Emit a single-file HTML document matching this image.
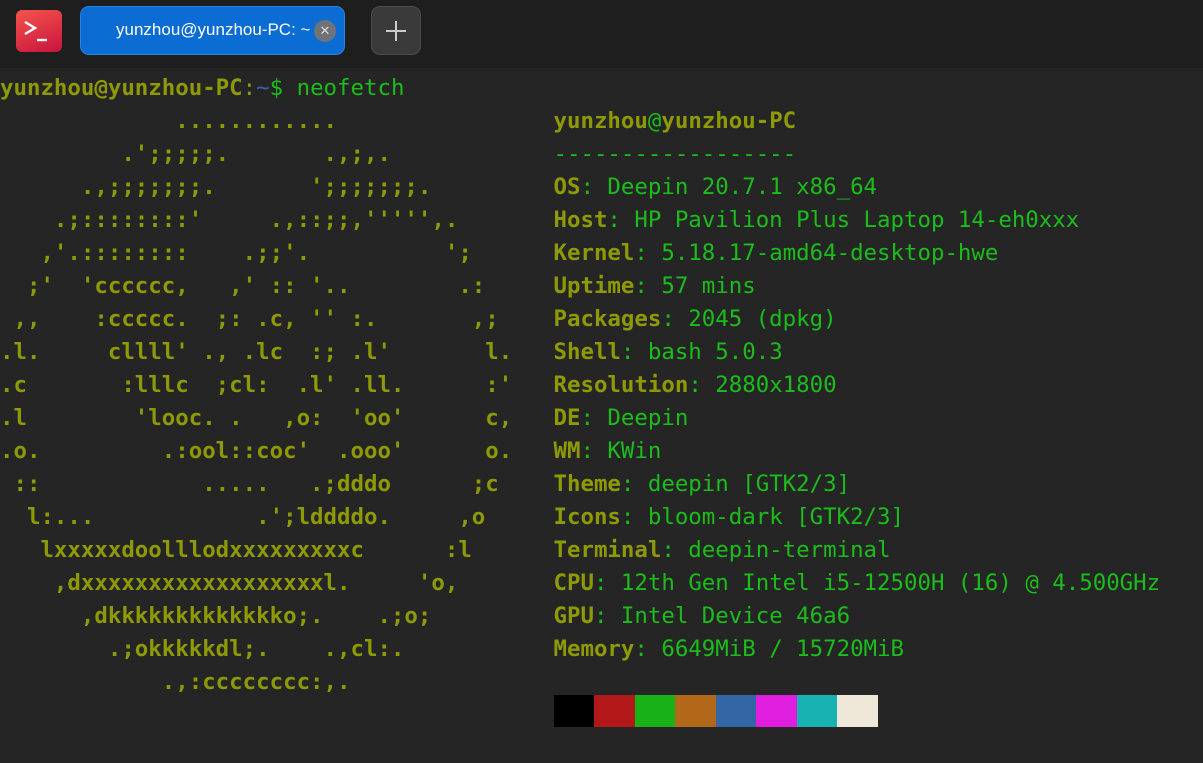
<!DOCTYPE html>
<html><head><meta charset="utf-8"><style>
html,body{margin:0;padding:0;width:1203px;height:763px;overflow:hidden;background:#252525;}
#bar{position:absolute;left:0;top:0;width:1203px;height:68px;background:#1e1e1e;}
#icon{position:absolute;left:16px;top:10px;width:46px;height:42px;border-radius:6px;background:linear-gradient(160deg,#f4544c,#c8143e);}
#tab{position:absolute;left:80px;top:6px;width:265px;height:49px;border-radius:9px;background:#0b6cd4;box-sizing:border-box;border:1px solid #2a82e0;}
#tab span{position:absolute;left:35px;top:13px;color:#fff;font:17px "Liberation Sans",sans-serif;}
#close{position:absolute;left:233px;top:13px;width:22px;height:22px;border-radius:50%;background:#6f7378;color:#ddd;font:13px "Liberation Sans",sans-serif;text-align:center;line-height:22px;}
#plus{position:absolute;left:371px;top:6px;width:50px;height:49px;border-radius:9px;background:#3a3a3a;box-sizing:border-box;border:1px solid #4c4c4c;}
pre{position:absolute;margin:0;font-family:"DejaVu Sans Mono","Liberation Mono",monospace;font-size:22.4px;line-height:33px;white-space:pre;}
.o{color:#8d9a05;}
.g{color:#1bbd1b;}
.b{color:#3465a4;}
.k{color:#8d9a05;font-weight:bold;}
.sw{position:absolute;top:695px;height:32px;width:40.5px;}
</style></head><body>
<div id="bar">
<div id="icon"><svg width="46" height="42" viewBox="0 0 46 42"><path d="M9 12 L19 18 L9 24" stroke="#fff" stroke-width="2.4" fill="none"/><path d="M21 30 H31" stroke="#fff" stroke-width="2.4"/></svg></div>
<div id="tab"><span>yunzhou@yunzhou-PC: ~</span><div id="close">✕</div></div>
<div id="plus"><svg width="48" height="47" viewBox="0 0 48 47"><path d="M24 14 V34 M14 24 H34" stroke="#ccc" stroke-width="2"/></svg></div>
</div>
<pre style="left:0;top:72px"><span class="k">yunzhou@yunzhou-PC</span><span class="o">:</span><span class="b">~</span><span class="g">$ neofetch</span></pre>
<pre class="o" style="left:0;top:105px;font-weight:bold">             ............
         .';;;;;.       .,;,.
      .,;;;;;;;.       ';;;;;;;.
    .;::::::::'     .,::;;,''''',.
   ,'.::::::::    .;;'.          ';
  ;'  'cccccc,   ,' :: '..        .:
 ,,    :ccccc.  ;: .c, '' :.       ,;
.l.     cllll' ., .lc  :; .l'       l.
.c       :lllc  ;cl:  .l' .ll.      :'
.l        'looc. .   ,o:  'oo'      c,
.o.         .:ool::coc'  .ooo'      o.
 ::            .....   .;dddo      ;c
  l:...            .';lddddo.     ,o
   lxxxxxdoolllodxxxxxxxxxc      :l
    ,dxxxxxxxxxxxxxxxxxxl.     'o,
      ,dkkkkkkkkkkkkko;.    .;o;
        .;okkkkkdl;.    .,cl:.
            .,:cccccccc:,.</pre>
<pre class="g" style="left:553.5px;top:105px"><span class="k">yunzhou</span>@<span class="k">yunzhou-PC</span>
------------------
<span class="k">OS</span>: Deepin 20.7.1 x86_64
<span class="k">Host</span>: HP Pavilion Plus Laptop 14-eh0xxx
<span class="k">Kernel</span>: 5.18.17-amd64-desktop-hwe
<span class="k">Uptime</span>: 57 mins
<span class="k">Packages</span>: 2045 (dpkg)
<span class="k">Shell</span>: bash 5.0.3
<span class="k">Resolution</span>: 2880x1800
<span class="k">DE</span>: Deepin
<span class="k">WM</span>: KWin
<span class="k">Theme</span>: deepin [GTK2/3]
<span class="k">Icons</span>: bloom-dark [GTK2/3]
<span class="k">Terminal</span>: deepin-terminal
<span class="k">CPU</span>: 12th Gen Intel i5-12500H (16) @ 4.500GHz
<span class="k">GPU</span>: Intel Device 46a6
<span class="k">Memory</span>: 6649MiB / 15720MiB</pre>
<div class="sw" style="left:554px;background:#000"></div>
<div class="sw" style="left:594px;background:#b21818"></div>
<div class="sw" style="left:635px;background:#18b218"></div>
<div class="sw" style="left:675px;background:#b26818"></div>
<div class="sw" style="left:716px;background:#3466a6"></div>
<div class="sw" style="left:756px;background:#e01ee0"></div>
<div class="sw" style="left:797px;background:#18b2b2"></div>
<div class="sw" style="left:837px;background:#efe8d8"></div>
</body></html>
